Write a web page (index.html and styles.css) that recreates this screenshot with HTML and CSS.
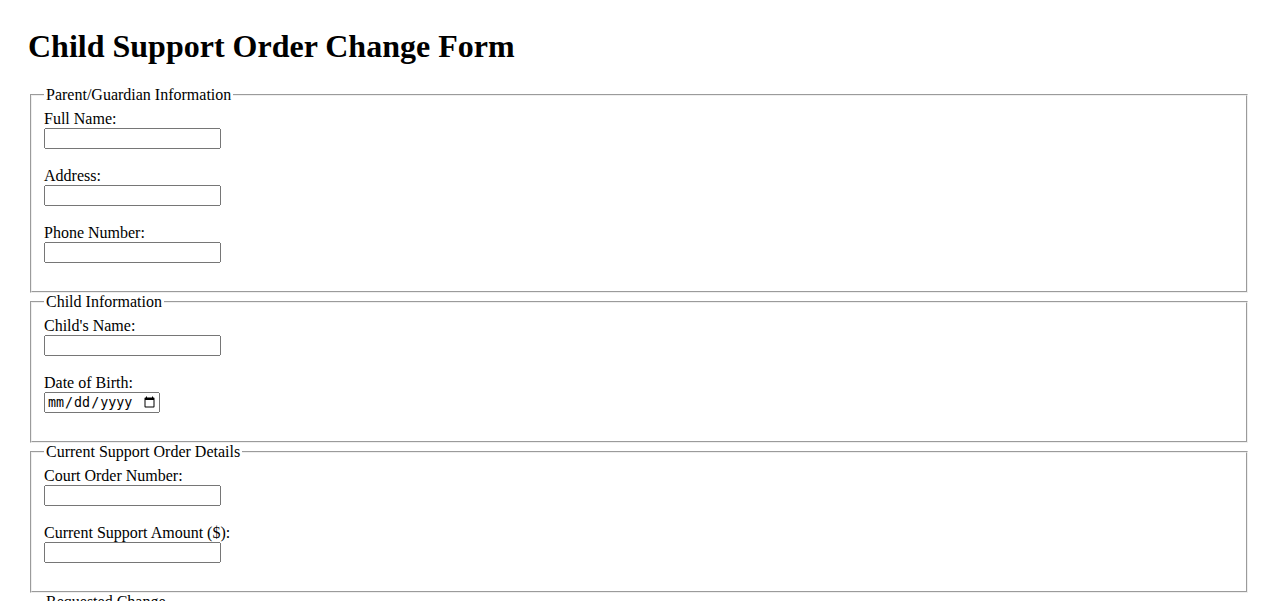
FILE: index.html
```html
<!DOCTYPE html>
<html lang="en">
<head>
<meta charset="utf-8">
<title>Child Support Order Change Form</title>
<link rel="stylesheet" href="styles.css">
</head>
<body>
<h1 class="title">Child Support Order Change Form</h1>
<form class="form">
  <fieldset class="section">
    <legend>Parent/Guardian Information</legend>
    <label for="fullname">Full Name:</label><br>
    <input class="field" type="text" id="fullname"><br><br>
    <label for="address">Address:</label><br>
    <input class="field" type="text" id="address"><br><br>
    <label for="phone">Phone Number:</label><br>
    <input class="field" type="text" id="phone"><br><br>
  </fieldset>
  <fieldset class="section">
    <legend>Child Information</legend>
    <label for="childname">Child's Name:</label><br>
    <input class="field" type="text" id="childname"><br><br>
    <label for="dob">Date of Birth:</label><br>
    <input class="date-field" type="date" id="dob"><br><br>
  </fieldset>
  <fieldset class="section">
    <legend>Current Support Order Details</legend>
    <label for="order">Court Order Number:</label><br>
    <input class="field" type="text" id="order"><br><br>
    <label for="amount">Current Support Amount ($):</label><br>
    <input class="field" type="text" id="amount"><br><br>
  </fieldset>
  <fieldset class="section">
    <legend>Requested Change</legend>
    <label for="newamount">Requested Support Amount ($):</label><br>
    <input class="field" type="text" id="newamount"><br><br>
    <label for="reason">Reason for Change:</label><br>
    <textarea id="reason" rows="4" cols="50"></textarea><br><br>
  </fieldset>
  <input type="submit" value="Submit">
</form>
</body>
</html>
```
FILE: styles.css
```css
body {
  margin: 0;
  padding: 28px;
  font-family: "Liberation Serif", "Times New Roman", serif;
  font-size: 16px;
  color: #000;
  background: #fff;
}
.title {
  margin: 0 0 21.44px 0;
  font-size: 32px;
  font-weight: bold;
}
.section {
  margin: 0 2px;
}
.field {
  box-sizing: border-box;
  width: 177px;
}
.date-field {
  box-sizing: border-box;
  width: 116px;
}
```
